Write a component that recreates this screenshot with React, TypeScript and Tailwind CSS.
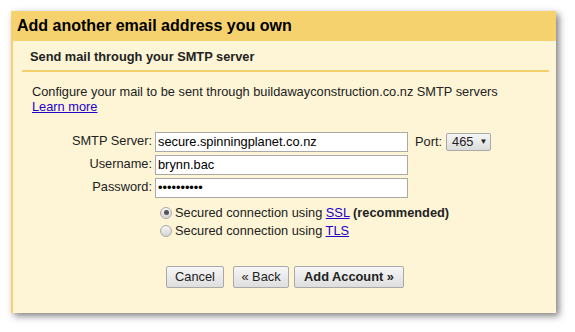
import React from "react";

function Radio({ checked }: { checked?: boolean }) {
  return (
    <span className="w-[12px] h-[12px] rounded-full border border-[#a8a8a8] bg-gradient-to-b from-[#f4f4f4] to-[#d6d6d6] flex items-center justify-center shrink-0">
      {checked && <span className="w-[5px] h-[5px] rounded-full bg-[#555]" />}
    </span>
  );
}

function Button({ children, bold, w }: { children: React.ReactNode; bold?: boolean; w: string }) {
  return (
    <button
      className={`${w} h-[22px] border border-[#a9a9a9] rounded-[2px] bg-gradient-to-b from-[#f6f6f6] to-[#dedede] text-[12.8px] text-[#222] flex items-center justify-center ${
        bold ? "font-bold" : ""
      }`}
    >
      {children}
    </button>
  );
}

export default function App() {
  const fields = [
    { label: "SMTP Server:", value: "secure.spinningplanet.co.nz" },
    { label: "Username:", value: "brynn.bac" },
    { label: "Password:", value: "••••••••••" },
  ];

  return (
    <div className="w-[575px] h-[332px] bg-white pt-[11px] pl-[11px] font-['Liberation_Sans',Arial,sans-serif] text-[#222]">
      <div className="w-[545px] h-[302px] flex flex-col shadow-[3px_3px_7px_rgba(0,0,0,0.5)]">
        {/* Title */}
        <div className="h-[30px] bg-[#f5d26d] flex items-center pl-[6px]">
          <span className="text-[16px] font-bold text-black">Add another email address you own</span>
        </div>

        {/* Body */}
        <div className="flex-1 bg-[#fdf5d6] border-l-2 border-[#f5d26d]">
          <div className="ml-[9px] mr-[7px] pt-[8px] border-b-2 border-[#f2d06c] pb-[6px] pl-[8px]">
            <span className="text-[12.8px] font-bold leading-[15px] block">Send mail through your SMTP server</span>
          </div>

          <div className="pl-[19px] pt-[12px] text-[12.8px] leading-[15px]">
            <div>Configure your mail to be sent through buildawayconstruction.co.nz SMTP servers</div>
            <a className="text-[#2200cc] underline">Learn more</a>
          </div>

          {/* Form */}
          <div className="mt-[18px] flex flex-col gap-[3px] text-[12.8px]">
            {fields.map((f, i) => (
              <div key={f.label} className="flex items-start">
                <div className="w-[139px] text-right leading-[15px] pt-[1px]">{f.label}</div>
                <div className="ml-[3px] w-[253px] h-[20px] bg-white border border-[#a9a9a9] flex items-center pl-[2px] text-[12.8px] text-black">
                  {f.value}
                </div>
                {i === 0 && (
                  <div className="flex items-center ml-[7px] h-[20px]">
                    <span>Port:</span>
                    <span className="ml-[4px] w-[45px] h-[18px] border border-[#a9a9a9] rounded-[2px] bg-gradient-to-b from-[#f6f6f6] to-[#dcdcdc] flex items-center pl-[5px] gap-[6px]">
                      465 <span className="text-[8px]">▼</span>
                    </span>
                  </div>
                )}
              </div>
            ))}
          </div>

          {/* Security options */}
          <div className="mt-[7px] pl-[147px] flex flex-col gap-[3px] text-[12.8px] leading-[15px]">
            <div className="flex items-center gap-[3px]">
              <Radio checked />
              <span>
                Secured connection using <a className="text-[#2200cc] underline">SSL</a>{" "}
                <b>(recommended)</b>
              </span>
            </div>
            <div className="flex items-center gap-[3px]">
              <Radio />
              <span>
                Secured connection using <a className="text-[#2200cc] underline">TLS</a>
              </span>
            </div>
          </div>

          {/* Buttons */}
          <div className="mt-[28px] pl-[153px] flex items-center">
            <Button w="w-[58px]">Cancel</Button>
            <div className="ml-[9px]">
              <Button w="w-[56px]">« Back</Button>
            </div>
            <div className="ml-[5px]">
              <Button w="w-[110px]" bold>
                Add Account »
              </Button>
            </div>
          </div>
        </div>
      </div>
    </div>
  );
}
